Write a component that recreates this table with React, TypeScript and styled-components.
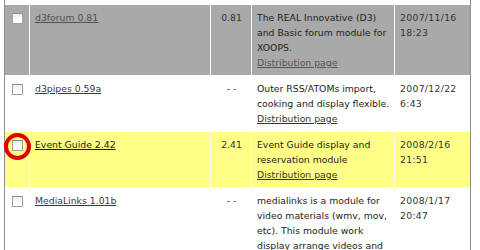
import React from 'react';
import styled, { createGlobalStyle } from 'styled-components';

const GlobalStyle = createGlobalStyle`
  html, body {
    margin: 0;
    padding: 0;
    background: #fff;
    overflow: hidden;
  }
  body {
    font-family: 'DejaVu Sans', Verdana, sans-serif;
    font-size: 9.3px;
    color: #222;
  }
`;

type Tone = 'gray' | 'plain' | 'highlight';

interface IModule {
  name: string;
  version: string;
  description: string[];
  date: string[];
  tone: Tone;
  marked?: boolean;
}

const modules: IModule[] = [
  {
    name: 'd3forum 0.81',
    version: '0.81',
    description: ['The REAL Innovative (D3)', 'and Basic forum module for', 'XOOPS.'],
    date: ['2007/11/16', '18:23'],
    tone: 'gray',
  },
  {
    name: 'd3pipes 0.59a',
    version: '- -',
    description: ['Outer RSS/ATOMs import,', 'cooking and display flexible.'],
    date: ['2007/12/22', '6:43'],
    tone: 'plain',
  },
  {
    name: 'Event Guide 2.42',
    version: '2.41',
    description: ['Event Guide display and', 'reservation module'],
    date: ['2008/2/16', '21:51'],
    tone: 'highlight',
    marked: true,
  },
  {
    name: 'MediaLinks 1.01b',
    version: '- -',
    description: [
      'medialinks is a module for',
      'video materials (wmv, mov,',
      'etc). This module work',
      'display arrange videos and',
      'images.',
    ],
    date: ['2008/1/17', '20:47'],
    tone: 'plain',
  },
];

const rowBackground: Record<Tone, string> = {
  gray: '#a9a9a9',
  plain: '#ffffff',
  highlight: '#ffff88',
};

const Frame = styled.div`
  margin-left: 4px;
  width: 465px;
  height: 250px;
  border-left: 1px solid #8e8e8e;
  border-right: 1px solid #8e8e8e;
  padding-top: 4px;
`;

const Table = styled.table`
  width: 467px;
  margin-left: -1px;
  border-collapse: separate;
  border-spacing: 1px;
  table-layout: fixed;
`;

const Row = styled.tr<{ $tone: Tone }>`
  background: ${(p) => rowBackground[p.$tone]};
`;

const Cell = styled.td<{ $align?: 'left' | 'center' }>`
  vertical-align: top;
  padding: 5px 4px 5px 5px;
  line-height: 15px;
  white-space: nowrap;
  text-align: ${(p) => p.$align || 'left'};
`;

const CheckCell = styled.td`
  position: relative;
  vertical-align: top;
  padding: 8px 0 0 0;
  text-align: center;
`;

const Check = styled.input.attrs({ type: 'checkbox' })`
  appearance: none;
  display: block;
  margin: 0 auto;
  width: 11px;
  height: 11px;
  box-sizing: border-box;
  border: 1px solid #a0a0a0;
  border-top-color: #8c8c8c;
  background: linear-gradient(#ececec, #ffffff 60%);
`;

const Mark = styled.span`
  position: absolute;
  left: -1px;
  top: 1px;
  width: 19px;
  height: 19px;
  border: 4px solid #dd0000;
  border-radius: 50%;
`;

const NameLink = styled.a<{ $tone: Tone }>`
  color: ${(p) => (p.$tone === 'gray' ? '#505050' : p.$tone === 'highlight' ? '#1a1a1a' : '#3a3a3a')};
  text-decoration: underline;
`;

const PageLink = styled.a<{ $tone: Tone }>`
  color: ${(p) => (p.$tone === 'gray' ? '#555' : '#333')};
  text-decoration: underline;
`;

const Version = styled.span`
  color: #333;
`;

const Stamp = styled.span`
  color: #333;
  letter-spacing: 0.3px;
`;

const App = (): JSX.Element => {
  return (
    <>
      <GlobalStyle />
      <Frame>
        <Table>
          <colgroup>
            <col style={{ width: 24 }} />
            <col style={{ width: 180 }} />
            <col style={{ width: 40 }} />
            <col style={{ width: 142 }} />
            <col style={{ width: 75 }} />
          </colgroup>
          <tbody>
            {modules.map((m) => (
              <Row key={m.name} $tone={m.tone}>
                <CheckCell>
                  <Check />
                  {m.marked && <Mark />}
                </CheckCell>
                <Cell>
                  <NameLink href='#' $tone={m.tone}>{m.name}</NameLink>
                </Cell>
                <Cell $align='center'>
                  <Version>{m.version}</Version>
                </Cell>
                <Cell>
                  {m.description.map((line) => (
                    <React.Fragment key={line}>
                      {line}
                      <br />
                    </React.Fragment>
                  ))}
                  <PageLink href='#' $tone={m.tone}>Distribution page</PageLink>
                </Cell>
                <Cell>
                  <Stamp>
                    {m.date[0]}
                    <br />
                    {m.date[1]}
                  </Stamp>
                </Cell>
              </Row>
            ))}
          </tbody>
        </Table>
      </Frame>
    </>
  );
};

export default App;
